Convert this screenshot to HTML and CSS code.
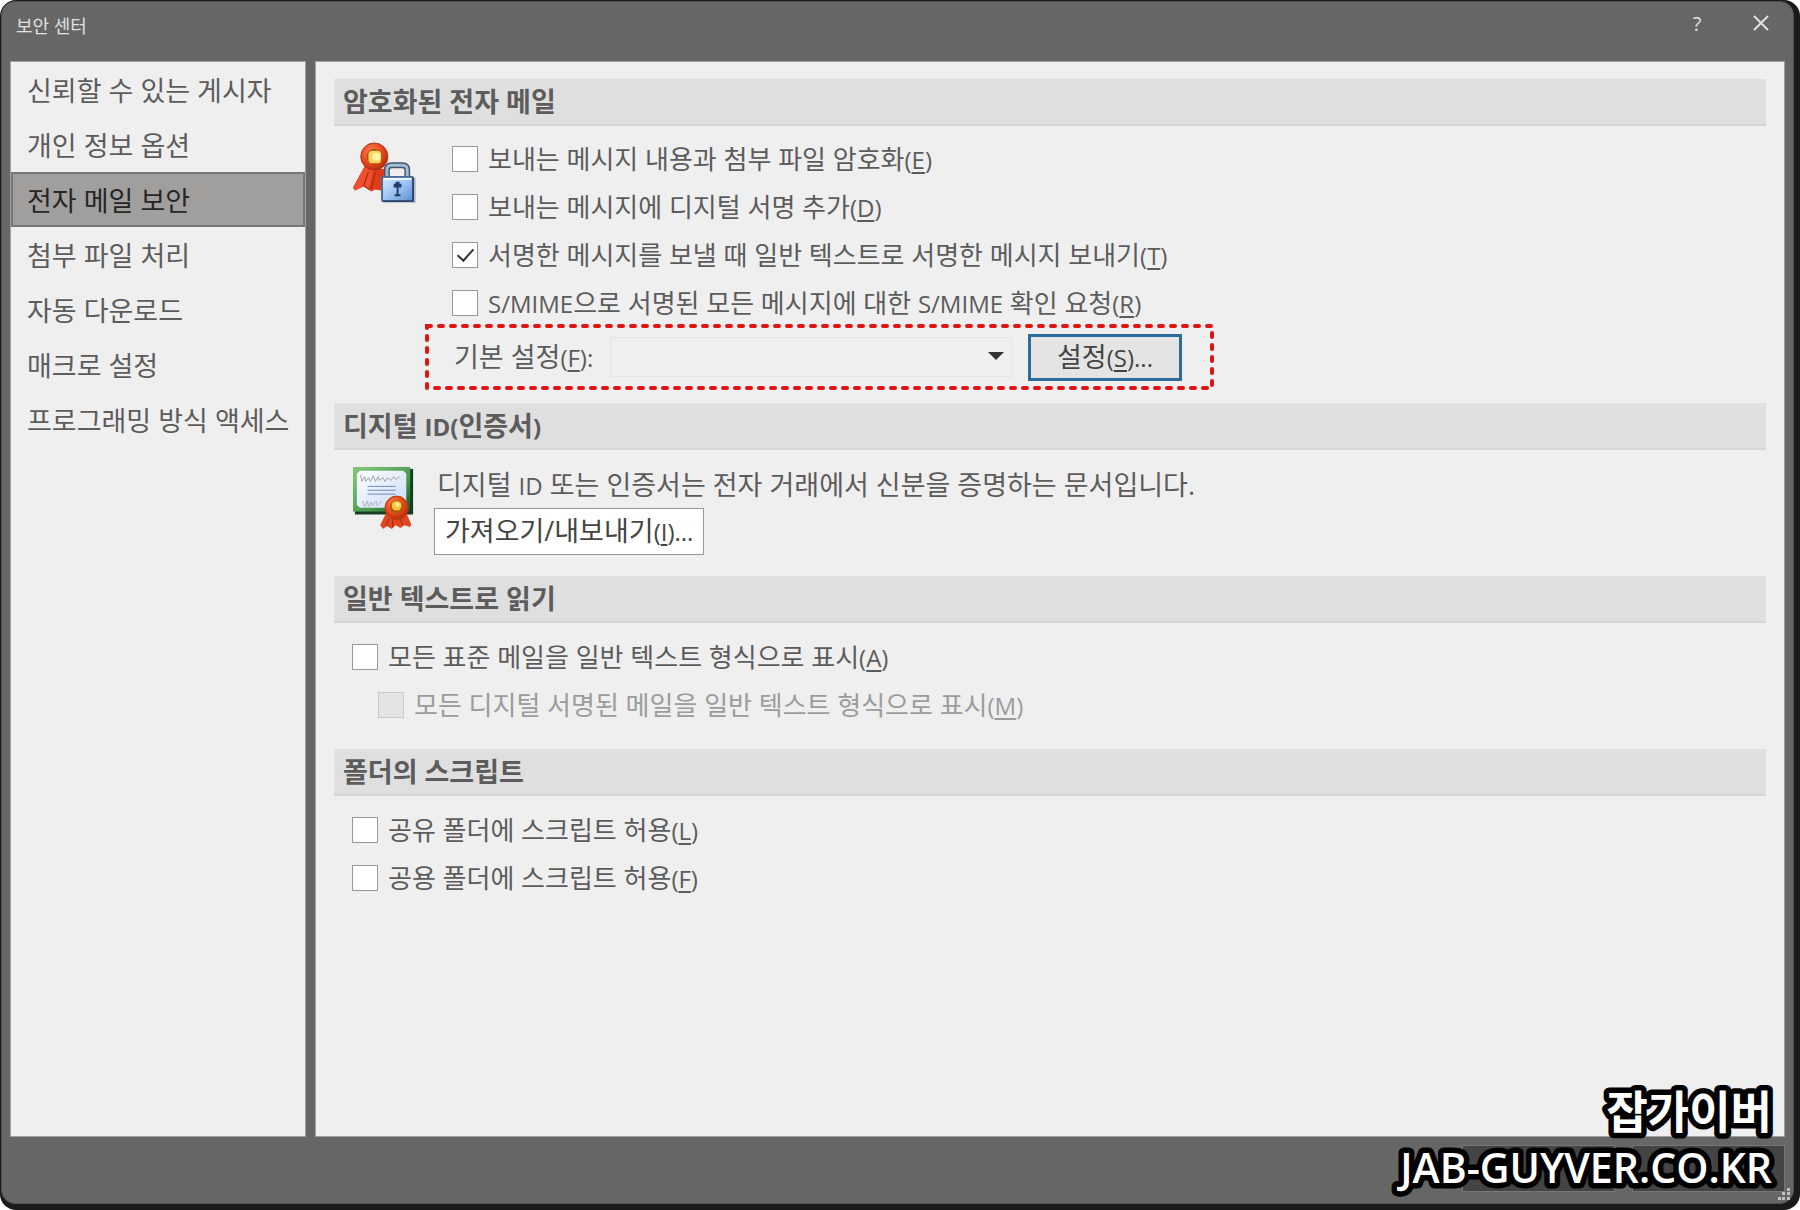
FILE: index.html
```html
<!DOCTYPE html>
<html lang="ko">
  <head>
    <meta charset="utf-8">
    <title>보안 센터</title>
    <link rel="stylesheet" href="styles.css">
  </head>
  <body>
    <div class="frame">
      <div class="window">
        <header class="titlebar">
          <h1>보안 센터</h1>
          <button class="winbtn" aria-label="도움말">?</button>
          <button class="winbtn" aria-label="닫기">
            <svg width="16" height="16" viewBox="0 0 16 16"><path d="M1 1 L15 15 M15 1 L1 15" stroke="#e0e0e0" stroke-width="2" fill="none"/></svg>
          </button>
        </header>

        <div class="content">
          <nav class="sidebar">
            <a href="#">신뢰할 수 있는 게시자</a>
            <a href="#">개인 정보 옵션</a>
            <a href="#" class="selected">전자 메일 보안</a>
            <a href="#">첨부 파일 처리</a>
            <a href="#">자동 다운로드</a>
            <a href="#">매크로 설정</a>
            <a href="#">프로그래밍 방식 액세스</a>
          </nav>

          <main class="panel">
            <section>
              <h2>암호화된 전자 메일</h2>
              <div class="withicon">
                <svg class="icon" width="64" height="64" viewBox="0 0 66 66">
                  <defs>
                    <radialGradient id="seal" cx="40%" cy="35%" r="65%">
                      <stop offset="0" stop-color="#ff8a5c"/>
                      <stop offset="0.6" stop-color="#e8481c"/>
                      <stop offset="1" stop-color="#b8300c"/>
                    </radialGradient>
                    <linearGradient id="lock" x1="0" y1="0" x2="1" y2="1">
                      <stop offset="0" stop-color="#dcecff"/>
                      <stop offset="0.5" stop-color="#9cc4f4"/>
                      <stop offset="1" stop-color="#5c8ccc"/>
                    </linearGradient>
                  </defs>
                  <path d="M13 25 L1 47 L3 50 L12 46 L20 51 L24 49 L30 50 L34 28 Z" fill="#e03c1c"/>
                  <path d="M13 25 L2 46 L3 50 L12 46 L17 48 L22 29 Z" fill="#ee5030"/>
                  <path d="M17 31 L12 45 L18 49 M24 31 L20 48" fill="none" stroke="#9c2008" stroke-width="1"/>
                  <circle cx="23" cy="15" r="14" fill="url(#seal)" stroke="#a83418" stroke-width="1"/>
                  <circle cx="23" cy="15" r="8" fill="#a85418"/>
                  <rect x="17" y="9" width="13" height="13" rx="4" fill="#fcd45c"/>
                  <rect x="21" y="11" width="8" height="8" rx="2" fill="#fff4a4"/>
                  <path d="M36 37 V29 Q36 24 41 24 H52 Q57 24 57 29 V37" fill="none" stroke="#40546c" stroke-width="6"/>
                  <path d="M36 37 V29 Q36 24 41 24 H52 Q57 24 57 29 V37" fill="none" stroke="#a4bcd4" stroke-width="3"/>
                  <rect x="32" y="37" width="34" height="26" fill="#c8c8cc"/>
                  <rect x="31" y="36" width="32" height="25" rx="1" fill="url(#lock)" stroke="#4c6c98" stroke-width="2"/>
                  <path d="M33 38 H61" stroke="#f4f9ff" stroke-width="2"/>
                  <path d="M63 37 V61 H32" fill="none" stroke="#2c4874" stroke-width="2"/>
                  <path d="M45 41 h4 v2 h2 v4 h-3 v7 h2 v2 h-6 v-2 h2 v-7 h-3 v-4 h2 Z" fill="#203c68"/>
                </svg>
                <div class="options">
                  <label class="check"><input type="checkbox"><span>보내는 메시지 내용과 첨부 파일 암호화<span class="key">(<u>E</u>)</span></span></label>
                  <label class="check"><input type="checkbox"><span>보내는 메시지에 디지털 서명 추가<span class="key">(<u>D</u>)</span></span></label>
                  <label class="check"><input type="checkbox" checked><span>서명한 메시지를 보낼 때 일반 텍스트로 서명한 메시지 보내기<span class="key">(<u>T</u>)</span></span></label>
                  <label class="check"><input type="checkbox"><span><span class="key">S/MIME</span>으로 서명된 모든 메시지에 대한 <span class="key">S/MIME</span> 확인 요청<span class="key">(<u>R</u>)</span></span></label>
                  <div class="defaults">
                    <label for="setting">기본 설정<span class="key">(<u>F</u>):</span></label>
                    <div class="dropdown">
                      <select id="setting" disabled><option></option></select>
                    </div>
                    <button class="btn focused">설정<span class="key">(<u>S</u>)...</span></button>
                    <svg class="marker"><rect x="2" y="2"/></svg>
                  </div>
                </div>
              </div>
            </section>

            <section>
              <h2>디지털 <span class="key">ID(</span>인증서<span class="key">)</span></h2>
              <div class="withicon">
                <svg class="icon" width="64" height="64" viewBox="0 0 66 66">
                  <defs>
                    <linearGradient id="border" x1="0" y1="0" x2="1" y2="1">
                      <stop offset="0" stop-color="#84c87c"/>
                      <stop offset="0.6" stop-color="#4c9c50"/>
                      <stop offset="1" stop-color="#145424"/>
                    </linearGradient>
                    <linearGradient id="paper" x1="0" y1="0" x2="1" y2="1">
                      <stop offset="0" stop-color="#ffffff"/>
                      <stop offset="1" stop-color="#c8dcf8"/>
                    </linearGradient>
                  </defs>
                  <rect x="3" y="3" width="60" height="47" fill="#183c20"/>
                  <rect x="1" y="1" width="59" height="46" fill="url(#border)"/>
                  <path d="M8 5 H53 L56 8 V40 L53 43 H8 L5 40 V8 Z" fill="url(#paper)"/>
                  <path d="M9 9 l1 7 l3 -5 l1 5 l3 -4 l2 4 l3 -6 l2 6 l3 -5 l1 4 l4 -3 l2 4 l3 -4 l3 3 l3 -4 l2 3 l4 -3" fill="none" stroke="#a0a0a8" stroke-width="1"/>
                  <path d="M16 21 H45 M16 25 H45 M16 29 H45" stroke="#6c88b8" stroke-width="1"/>
                  <path d="M11 36 l2 6 l3 -6 l1 6 l3 -5 l1 4 l4 -5 l1 5 l5 -5" fill="none" stroke="#b0b0b8" stroke-width="1"/>
                  <path d="M35 49 L29 61 L32 65 L36 62 L41 65 L45 61 L50 64 L54 61 L60 63 L61 60 L55 46 Z" fill="#e04820"/>
                  <path d="M38 54 L35 62 M42 55 V63 M50 54 L52 61" stroke="#9c2808" stroke-width="1"/>
                  <circle cx="46" cy="43" r="12" fill="url(#seal)" stroke="#b03c14" stroke-width="1"/>
                  <circle cx="46" cy="42" r="7" fill="#b4580c"/>
                  <circle cx="46" cy="41" r="5" fill="#fcc43c"/>
                  <circle cx="47" cy="40" r="2" fill="#fff4b4"/>
                </svg>
                <div class="idinfo">
                  <p>디지털 <span class="key">ID</span> 또는 인증서는 전자 거래에서 신분을 증명하는 문서입니다.</p>
                  <button class="btn">가져오기/내보내기<span class="key">(<u>I</u>)...</span></button>
                </div>
              </div>
            </section>

            <section>
              <h2>일반 텍스트로 읽기</h2>
              <div class="plain">
                <label class="check"><input type="checkbox"><span>모든 표준 메일을 일반 텍스트 형식으로 표시<span class="key">(<u>A</u>)</span></span></label>
                <label class="check sub"><input type="checkbox" disabled><span>모든 디지털 서명된 메일을 일반 텍스트 형식으로 표시<span class="key">(<u>M</u>)</span></span></label>
              </div>
            </section>

            <section>
              <h2>폴더의 스크립트</h2>
              <div class="plain">
                <label class="check"><input type="checkbox"><span>공유 폴더에 스크립트 허용<span class="key">(<u>L</u>)</span></span></label>
                <label class="check"><input type="checkbox"><span>공용 폴더에 스크립트 허용<span class="key">(<u>F</u>)</span></span></label>
              </div>
            </section>
          </main>
        </div>

        <footer class="footer">
          <button class="btn dark" aria-label="확인"></button>
          <button class="btn dark" aria-label="취소"></button>
        </footer>

        <svg class="grip" width="12" height="12" viewBox="0 0 12 12" fill="#c0c0c0">
          <path d="M9 0h3v3h-3z M9 4h3v3h-3z M9 9h3v3h-3z M4 4h3v3h-3z M4 9h3v3h-3z M0 9h3v3h-3z"/>
        </svg>
      </div>

      <svg class="watermark" width="420" height="130">
        <text class="name" x="392" y="49">잡가이버</text>
        <text class="site" x="392" y="103">JAB-GUYVER.CO.KR</text>
      </svg>
    </div>
  </body>
</html>
```

FILE: styles.css
```css
* {
  box-sizing: border-box;
}
body {
  margin: 0;
  background: #fff;
  color: #5c5c5c;
  font-family: "Open Sans", "Noto Sans CJK KR", sans-serif;
  font-size: 27px;
  line-height: 36px;
}
button, select {
  font: inherit;
  color: inherit;
}
h1, h2, p {
  margin: 0;
}
u {
  text-decoration-thickness: 2px;
  text-underline-offset: 3px;
}
/* latin letters and access keys run a little smaller than the hangul */
.key {
  font-size: 24px;
}

/* window frame */
.frame {
  position: relative;
  display: flex;
  min-height: 100vh;
  padding: 1px 6px 6px 1px;
  background: #1a1a1a;
  border-radius: 16px;
}
.window {
  position: relative;
  display: flex;
  flex: 1;
  flex-direction: column;
  background: #666;
  border: 1px solid #505050;
  border-radius: 14px;
}
.titlebar {
  display: flex;
  height: 59px;
  padding: 6px 0 0 14px;
}
.titlebar h1 {
  flex: 1;
  color: #e0e0e0;
  font-size: 18px;
  font-weight: 400;
}
.winbtn {
  width: 64px;
  height: 32px;
  padding: 0;
  background: none;
  border: 0;
  color: #e0e0e0;
  font-size: 20px;
  line-height: 32px;
}

/* two columns */
.content {
  display: flex;
  flex: 1;
  gap: 9px;
  padding: 0 8px;
}
.sidebar, .panel {
  background: #efefef;
  border: 1px solid #a0a0a0;
}
.sidebar {
  width: 296px;
}
.sidebar a {
  display: block;
  height: 55px;
  padding: 0 15px;
  border: 1px solid transparent;
  color: #5c5c5c;
  line-height: 55px;
  text-decoration: none;
  white-space: nowrap;
}
.sidebar a.selected {
  background: #a19f9d;
  border: 2px solid #777;
  padding: 0 14px;
  color: #262626;
  line-height: 53px;
}
.panel {
  flex: 1;
  padding: 17px 18px;
}

/* sections */
h2 {
  height: 47px;
  padding: 0 9px;
  background: #dfdfdf;
  border-bottom: 2px solid #d6d6d6;
  font-size: 27px;
  font-weight: 700;
  line-height: 45px;
}
.withicon {
  display: flex;
  padding: 16px 18px 0;
}
.icon {
  flex: none;
}
.check {
  display: flex;
  align-items: center;
  height: 48px;
  gap: 10px;
  font-size: 26px;
}
.check input {
  appearance: none;
  width: 26px;
  height: 26px;
  margin: 0;
  background: #fff;
  border: 1px solid #999;
}
.check input:checked::after {
  content: "";
  display: block;
  width: 7px;
  height: 14px;
  margin: 2px 0 0 8px;
  border: solid #333;
  border-width: 0 2px 2px 0;
  transform: rotate(42deg);
}
.check input:disabled {
  background: #e4e4e4;
  border-color: #c8c8c8;
}
.check input:disabled + span {
  color: #9c9c9c;
}
.options {
  margin: -7px 0 13px 36px;
}
.plain {
  padding: 10px 18px 20px;
}
.sub {
  margin-left: 26px;
}

.defaults {
  position: relative;
  display: flex;
  align-items: center;
  height: 66px;
  margin: -3px -32px 0 -27px;
  padding: 0 32px 0 29px;
}
.defaults label {
  width: 156px;
}
.dropdown {
  position: relative;
  width: 402px;
  margin-right: 16px;
}
.dropdown::after {
  content: "";
  position: absolute;
  top: 15px;
  right: 8px;
  border: 8px solid transparent;
  border-top: 8px solid #333;
  border-bottom: 0;
}
.dropdown select {
  display: block;
  appearance: none;
  width: 100%;
  height: 40px;
  background: #efefef;
  border: 1px solid #e0e0e0;
  border-radius: 0;
}
.btn {
  height: 47px;
  padding: 0 10px;
  background: #fff;
  border: 1px solid #999;
  color: #444;
  line-height: 44px;
}
.btn.focused {
  width: 154px;
  background: #e4e4e4;
  border: 3px solid #2c6c9c;
  line-height: 40px;
}
/* dotted callout round the default settings row */
.marker {
  position: absolute;
  top: 0;
  left: 0;
  width: 100%;
  height: 100%;
  pointer-events: none;
}
.marker rect {
  width: calc(100% - 4px);
  height: calc(100% - 4px);
  fill: none;
  stroke: #e01414;
  stroke-width: 4px;
  stroke-linecap: round;
  stroke-dasharray: 4 8;
}

.idinfo {
  margin: 1px 0 21px 18px;
}
.idinfo p {
  margin: 0 0 4px 3px;
}

/* bottom bar */
.footer {
  display: flex;
  justify-content: flex-end;
  gap: 17px;
  padding: 8px 8px 11px;
}
.btn.dark {
  width: 153px;
  background: #444;
  border-color: #777;
}
.grip {
  position: absolute;
  right: 3px;
  bottom: 3px;
}
.watermark {
  position: absolute;
  right: 0;
  bottom: 0;
  fill: #fff;
  stroke: #000;
  stroke-width: 11px;
  stroke-linejoin: round;
  paint-order: stroke;
  text-anchor: end;
  pointer-events: none;
}
.name {
  font-size: 45px;
  font-weight: 700;
}
.site {
  font-size: 41px;
  font-weight: 600;
}
```
